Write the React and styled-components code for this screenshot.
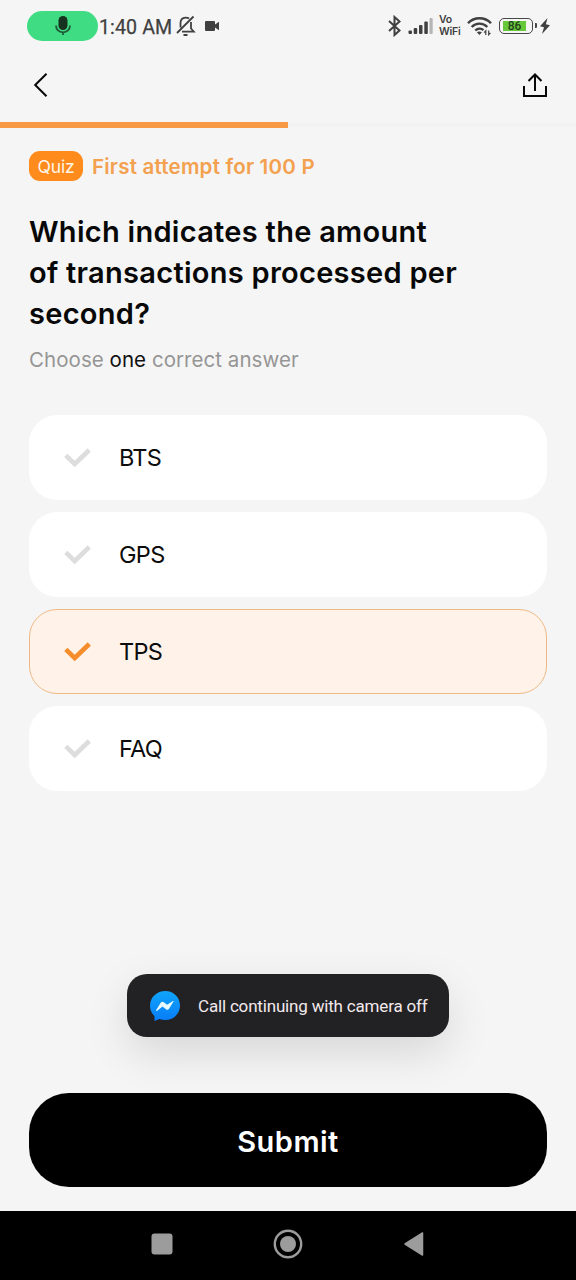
import {useState} from "react";
import styled, {createGlobalStyle} from "styled-components";

const GlobalStyle = createGlobalStyle`
  * {
    box-sizing: border-box;
  }

  body {
    margin: 0;
    background: #f5f5f5;
    font-family: Inter, "Liberation Sans", sans-serif;
  }
`;

const Screen = styled.div`
  width: 576px;
  height: 1280px;
  display: flex;
  flex-direction: column;
  background: #f5f5f5;
  color: #080808;
  overflow: hidden;
`;

const StatusBar = styled.div`
  height: 52px;
  flex: none;
  display: flex;
  justify-content: space-between;
  padding: 0 26px 0 27px;
  color: #404040;

  svg {
    display: block;
    flex: none;
  }
`;

const StatusGroup = styled.div`
  display: flex;
  align-items: center;
  height: 52px;
  gap: ${({$gap}) => $gap || 0}px;
`;

const MicPill = styled.div`
  width: 71px;
  height: 30px;
  border-radius: 15px;
  background: #40dc84;
  display: flex;
  align-items: center;
  justify-content: center;
`;

const Time = styled.span`
  width: 78px;
  font: 400 19.6px/30px Roboto, sans-serif;
  -webkit-text-stroke: 0.25px #404040;
  letter-spacing: 0.1px;
  white-space: nowrap;
  padding: 3px 0 0 1px;
`;

const VoWifi = styled.div`
  width: 22px;
  display: flex;
  flex-direction: column;
  font: 600 11px/12px "Open Sans", sans-serif;
  letter-spacing: -0.2px;
`;

const VoWifiLine = styled.span`
  height: 12px;
  font: 600 10.5px/12px Inter, sans-serif;
  white-space: nowrap;
`;

const Battery = styled.div`
  width: 34px;
  height: 16px;
  margin: 0 1px;
  border: 1.6px solid #484848;
  border-radius: 5px;
  padding: 2px;
  position: relative;

  &::after {
    content: "";
    position: absolute;
    right: -4.5px;
    top: 4px;
    width: 2px;
    height: 5px;
    border-radius: 0 1px 1px 0;
    background: #484848;
  }
`;

const BatteryLevel = styled.div`
  width: 23px;
  height: 10px;
  margin-left: 1px;
  background: #68c83c;
  color: #24441a;
  font: 500 12px/10.5px Roboto, sans-serif;
  text-align: center;
`;

const Header = styled.header`
  height: 69px;
  flex: none;
  display: flex;
  justify-content: space-between;
  align-items: center;
  padding: 0 28px 3px 33px;
`;

const IconButton = styled.button`
  display: flex;
  padding: 0;
  border: none;
  background: none;
  color: #080808;
`;

const Progress = styled.div`
  height: 7px;
  flex: none;
  display: flex;
  align-items: center;
`;

const ProgressPart = styled.div`
  flex: 1;
  height: ${({$done}) => ($done ? 6 : 4)}px;
  background: ${({$done}) => ($done ? "#f89a45" : "#f2f2f2")};
`;

const Content = styled.main`
  flex: 1;
  display: flex;
  flex-direction: column;
  padding: 23px 29px 0;
`;

const Attempt = styled.div`
  display: flex;
  align-items: center;
  gap: 9px;
  height: 30px;
  color: #f3a04f;
  font-size: 20.5px;
  font-weight: 600;
  white-space: nowrap;
`;

const AttemptText = styled.span`
  letter-spacing: 0.22px;
`;

const Badge = styled.span`
  width: 54px;
  height: 30px;
  border-radius: 11px;
  background: #ff8b1c;
  color: #fff5e8;
  font-size: 17.5px;
  font-weight: 400;
  line-height: 31px;
  letter-spacing: -0.2px;
  text-align: center;
`;

const Question = styled.h1`
  margin: 30px 0 0;
  font-size: 29px;
  font-weight: 600;
  line-height: 41px;
  letter-spacing: 0.28px;
  white-space: nowrap;
`;

const Line = styled.span`
  display: block;
`;

const Hint = styled.p`
  margin: 12px 0 0;
  font-size: 20.5px;
  line-height: 28px;
  letter-spacing: 0.05px;
  color: #959595;
  white-space: nowrap;

  b {
    font-weight: 400;
    color: #111111;
  }
`;

const Options = styled.div`
  display: flex;
  flex-direction: column;
  gap: 12px;
  margin-top: 41px;
`;

const Option = styled.button`
  width: 518px;
  height: 85px;
  display: flex;
  align-items: center;
  gap: 28px;
  padding: 0 34px;
  border: 1.5px solid ${({$active}) => ($active ? "#efb886" : "#ffffff")};
  border-radius: 28px;
  background: ${({$active}) => ($active ? "#fff3e9" : "#ffffff")};
  color: #0c0c0c;
  font: 400 23.5px/30px Inter, sans-serif;
  letter-spacing: -0.7px;

  svg {
    color: ${({$active}) => ($active ? "#f68d2c" : "#dddddd")};
  }
`;

const Toast = styled.div`
  align-self: center;
  width: 322px;
  height: 63px;
  margin-top: auto;
  margin-bottom: 56px;
  display: flex;
  align-items: center;
  gap: 18px;
  padding-left: 23px;
  border-radius: 20px;
  background: #222224;
  box-shadow: 0 16px 44px rgba(0, 0, 0, 0.12);
  color: #f3e9ec;
  font: 400 17px/24px Roboto, sans-serif;
  letter-spacing: -0.18px;
  white-space: nowrap;
`;

const ToastText = styled.span`
  padding-top: 1px;
`;

const Submit = styled.button`
  width: 518px;
  height: 94px;
  flex: none;
  margin-bottom: 24px;
  border: none;
  border-radius: 40px;
  background: #000000;
  color: #ffffff;
  font: 600 29px/36px Inter, sans-serif;
  letter-spacing: 0.5px;
  padding: 4px 0 0;
`;

const NavBar = styled.nav`
  height: 69px;
  flex: none;
  display: flex;
  justify-content: center;
  gap: 100px;
  padding: 18px 1px 0 0;
  background: #000000;
  color: #9c9c9c;
`;

const MicIcon = () => (
  <svg width="18" height="22" viewBox="0 0 18 22" fill="none">
    <rect x="4.5" y="1" width="9" height="14" rx="4.5" fill="#17331f"/>
    <path d="M2 10.5c0 4 3 6.8 7 6.8s7-2.8 7-6.8M9 17v3" stroke="#1d5936" strokeWidth="1.8"/>
  </svg>
);

const BellOffIcon = () => (
  <svg width="20" height="22" viewBox="0 0 20 22" fill="none" stroke="currentColor" strokeWidth="1.8">
    <path d="M1 18 17.5 1.5M4.5 12.5V8c0-3.2 2.1-5.2 5-5.4 1.4-.1 2.6.3 3.6 1M15 7v6.5l2.8 3.2H6"/>
    <path d="M7.5 20h4" strokeWidth="2"/>
  </svg>
);

const CameraIcon = () => (
  <svg width="14" height="10" viewBox="0 0 14 10" fill="currentColor">
    <path d="M1 0h8q1 0 1 1v2.500L14 .7v8.600l-4-2.800V9q0 1-1 1H1Q0 10 0 9V1q0-1 1-1Z"/>
  </svg>
);

const BluetoothIcon = () => (
  <svg width="15" height="22" viewBox="0 0 15 22" fill="none" stroke="currentColor" strokeWidth="2">
    <path d="m2 6 10.5 9.500L7.500 20V2l5 4.500L2 16"/>
  </svg>
);

const SignalIcon = () => (
  <svg width="25" height="18" viewBox="0 0 25 18" fill="currentColor">
    <rect x=".500" y="13.500" width="3.500" height="3.500" rx="1"/>
    <rect x="5.700" y="11" width="3.500" height="6" rx="1"/>
    <rect x="11" y="8" width="3.500" height="9" rx="1"/>
    <rect x="16.300" y="4.500" width="3.500" height="12.500" rx="1"/>
    <rect x="21.500" y="1" width="3.200" height="16" rx="1" fill="#b5b5b5"/>
  </svg>
);

const WifiIcon = () => (
  <svg width="25" height="20" viewBox="0 0 25 20" fill="none" stroke="currentColor" strokeWidth="2.4">
    <path d="M1 7.200c6.200-6.600 16.800-6.600 23 0M4.700 11c4.300-4.500 11.300-4.500 15.600 0M8.300 14.500c2.400-2.300 5.900-2.400 8.200-.3"/>
    <path d="m9.800 16.200 2.700 2.700 2.400-2.600c-1.600-1.200-3.500-1.200-5.100-.1Z" fill="currentColor" stroke="none"/>
    <path d="M18.800 19v-4.200l-1.700 1.800M21.700 14.500v4.200l1.700-1.800" strokeWidth="1.2"/>
  </svg>
);

const BoltIcon = () => (
  <svg width="10" height="16" viewBox="0 0 10 16" fill="currentColor">
    <path d="M7.500 0 0 8.200l4 1.100L2 16l8-8.800-4.100-1Z"/>
  </svg>
);

const BackIcon = () => (
  <svg width="16" height="26" viewBox="0 0 16 26" fill="none" stroke="currentColor" strokeWidth="2">
    <path d="M13.500 1.700 2.200 13l11.300 11.300"/>
  </svg>
);

const ShareIcon = () => (
  <svg width="26" height="26" viewBox="0 0 26 26" fill="none" stroke="currentColor" strokeWidth="2">
    <path d="M2 14v10h22V14M13 19V2.600M6.500 9 13 2.500 19.500 9"/>
  </svg>
);

const CheckIcon = () => (
  <svg width="27" height="20" viewBox="0 0 27 20" fill="none" stroke="currentColor" strokeWidth="4.6">
    <path d="m1.800 7.400 8.900 8.600L25.300 2"/>
  </svg>
);

const MessengerIcon = () => (
  <svg width="30" height="30" viewBox="0 0 30 30">
    <defs>
      <linearGradient id="messenger" x1="0" y1="0" x2="0" y2="1">
        <stop offset="0" stopColor="#10a5fb"/>
        <stop offset="1" stopColor="#087cf8"/>
      </linearGradient>
    </defs>
    <path d="M15.300 0C7 0 0 6.200 0 14.700c0 4.300 1.700 7.700 4.500 10.300V30l5-2c1.800.7 3.700 1 5.800 1C23.700 29 30 22.800 30 14.600 30 6.200 23.600 0 15.300 0Z" fill="url(#messenger)"/>
    <path d="m6.200 19 4.500-7.200q1.300-1.900 3.100-.6l3.300 2.500 5.900-3.600q1.100-.5.500.5l-4.600 7.300q-1.100 1.500-3 .3l-3.400-2.600-5.300 4.100q-1.400.8-1-.7Z" fill="#e9fbff"/>
  </svg>
);

const RecentsIcon = () => (
  <svg width="22" height="30" viewBox="0 0 22 30">
    <rect x=".500" y="4.500" width="21" height="21" rx="3" fill="currentColor"/>
  </svg>
);

const HomeIcon = () => (
  <svg width="30" height="30" viewBox="0 0 30 30">
    <circle cx="15" cy="15" r="13.200" fill="none" stroke="currentColor" strokeWidth="2.400"/>
    <circle cx="15" cy="15" r="8" fill="currentColor"/>
  </svg>
);

const NavBackIcon = () => (
  <svg width="22" height="30" viewBox="0 0 22 30">
    <path d="M2 15 19.500 4v22Z" fill="currentColor" stroke="currentColor" strokeWidth="1.500" strokeLinejoin="round"/>
  </svg>
);

const answers = ["BTS", "GPS", "TPS", "FAQ"];

export default function App() {
  const [selected, setSelected] = useState("TPS");
  const answersList = answers.map((answer) => <Option key={answer} $active={selected === answer}
                                                      onClick={() => setSelected(answer)}><CheckIcon/>{answer}</Option>);
  return <>
    <GlobalStyle/>
    <Screen>
      <StatusBar>
        <StatusGroup>
          <MicPill><MicIcon/></MicPill>
          <Time>1:40 AM</Time>
          <StatusGroup $gap={9}>
            <BellOffIcon/>
            <CameraIcon/>
          </StatusGroup>
        </StatusGroup>
        <StatusGroup $gap={6}>
          <BluetoothIcon/>
          <SignalIcon/>
          <VoWifi>
            <VoWifiLine>Vo</VoWifiLine>
            <VoWifiLine>WiFi</VoWifiLine>
          </VoWifi>
          <WifiIcon/>
          <Battery><BatteryLevel>86</BatteryLevel></Battery>
          <BoltIcon/>
        </StatusGroup>
      </StatusBar>
      <Header>
        <IconButton aria-label="Back"><BackIcon/></IconButton>
        <IconButton aria-label="Share"><ShareIcon/></IconButton>
      </Header>
      <Progress>
        <ProgressPart $done/>
        <ProgressPart/>
      </Progress>
      <Content>
        <Attempt>
          <Badge>Quiz</Badge>
          <AttemptText>First attempt for 100 P</AttemptText>
        </Attempt>
        <Question>
          <Line>Which indicates the amount</Line>
          <Line>of transactions processed per</Line>
          <Line>second?</Line>
        </Question>
        <Hint>Choose <b>one</b> correct answer</Hint>
        <Options>{answersList}</Options>
        <Toast>
          <MessengerIcon/>
          <ToastText>Call continuing with camera off</ToastText>
        </Toast>
        <Submit>Submit</Submit>
      </Content>
      <NavBar>
        <RecentsIcon/>
        <HomeIcon/>
        <NavBackIcon/>
      </NavBar>
    </Screen>
  </>
}
